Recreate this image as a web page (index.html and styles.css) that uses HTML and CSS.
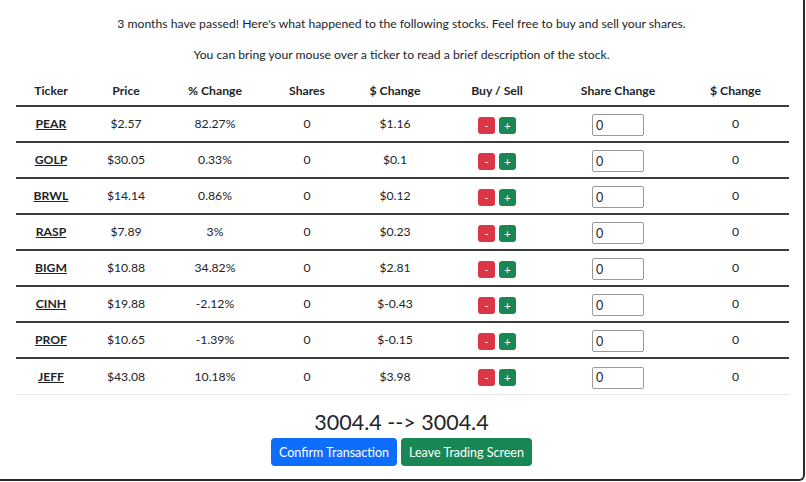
FILE: index.html
```html
<!DOCTYPE html>
<html lang="en">
<head>
  <meta charset="UTF-8" />
  <title>Trading Screen</title>
  <link rel="stylesheet" href="styles.css">
</head>
<body>
  <div class="window">
    <p class="intro">3 months have passed! Here's what happened to the following stocks. Feel free to buy and sell your shares.</p>
    <p class="intro">You can bring your mouse over a ticker to read a brief description of the stock.</p>

    <table class="stocks">
      <thead>
        <tr>
          <th class="c-ticker">Ticker</th>
          <th class="c-price">Price</th>
          <th class="c-pct">% Change</th>
          <th class="c-shares">Shares</th>
          <th class="c-dollar">$ Change</th>
          <th class="c-trade">Buy / Sell</th>
          <th class="c-share-chg">Share Change</th>
          <th class="c-total">$ Change</th>
        </tr>
      </thead>
      <tbody>
        <tr>
          <td><a class="ticker" href="#">PEAR</a></td><td>$2.57</td><td>82.27%</td><td>0</td><td>$1.16</td>
          <td><button class="mini sell">-</button><button class="mini buy">+</button></td>
          <td><input class="qty" type="text" value="0"></td><td>0</td>
        </tr>
        <tr>
          <td><a class="ticker" href="#">GOLP</a></td><td>$30.05</td><td>0.33%</td><td>0</td><td>$0.1</td>
          <td><button class="mini sell">-</button><button class="mini buy">+</button></td>
          <td><input class="qty" type="text" value="0"></td><td>0</td>
        </tr>
        <tr>
          <td><a class="ticker" href="#">BRWL</a></td><td>$14.14</td><td>0.86%</td><td>0</td><td>$0.12</td>
          <td><button class="mini sell">-</button><button class="mini buy">+</button></td>
          <td><input class="qty" type="text" value="0"></td><td>0</td>
        </tr>
        <tr>
          <td><a class="ticker" href="#">RASP</a></td><td>$7.89</td><td>3%</td><td>0</td><td>$0.23</td>
          <td><button class="mini sell">-</button><button class="mini buy">+</button></td>
          <td><input class="qty" type="text" value="0"></td><td>0</td>
        </tr>
        <tr>
          <td><a class="ticker" href="#">BIGM</a></td><td>$10.88</td><td>34.82%</td><td>0</td><td>$2.81</td>
          <td><button class="mini sell">-</button><button class="mini buy">+</button></td>
          <td><input class="qty" type="text" value="0"></td><td>0</td>
        </tr>
        <tr>
          <td><a class="ticker" href="#">CINH</a></td><td>$19.88</td><td>-2.12%</td><td>0</td><td>$-0.43</td>
          <td><button class="mini sell">-</button><button class="mini buy">+</button></td>
          <td><input class="qty" type="text" value="0"></td><td>0</td>
        </tr>
        <tr>
          <td><a class="ticker" href="#">PROF</a></td><td>$10.65</td><td>-1.39%</td><td>0</td><td>$-0.15</td>
          <td><button class="mini sell">-</button><button class="mini buy">+</button></td>
          <td><input class="qty" type="text" value="0"></td><td>0</td>
        </tr>
        <tr class="last">
          <td><a class="ticker" href="#">JEFF</a></td><td>$43.08</td><td>10.18%</td><td>0</td><td>$3.98</td>
          <td><button class="mini sell">-</button><button class="mini buy">+</button></td>
          <td><input class="qty" type="text" value="0"></td><td>0</td>
        </tr>
      </tbody>
    </table>

    <div class="balance">3004.4 --&gt; 3004.4</div>
    <div class="actions">
      <button class="btn primary">Confirm Transaction</button>
      <button class="btn success">Leave Trading Screen</button>
    </div>
  </div>
</body>
</html>
```

FILE: styles.css
```css
:root {
  --text: #212529;
  --line: #3c3c3c;
  --danger: #dc3545;
  --success: #198754;
  --primary: #0d6efd;
}

body {
  margin: 0;
  background: #fff;
  color: var(--text);
  font-family: Lato, "Open Sans", sans-serif;
  font-size: 12.2px;
  overflow: hidden;
}

.window {
  box-sizing: border-box;
  width: 805px;
  height: 481px;
  border-right: 2px solid #2a2a2a;
  border-bottom: 2px solid #2a2a2a;
  border-bottom-right-radius: 6px;
  padding: 14px 16px 0 16px;
  text-align: center;
}

.intro {
  margin: 0 0 11px;
  line-height: 20px;
}

.stocks {
  width: 773px;
  border-collapse: collapse;
  table-layout: fixed;
  margin-top: 8px;
  line-height: 18px;
}

.stocks th {
  font-weight: 700;
  height: 29px;
  padding: 0;
  border-bottom: 2px solid var(--line);
  vertical-align: middle;
}

.stocks td {
  height: 34px;
  padding: 0;
  border-bottom: 2px solid var(--line);
  vertical-align: middle;
}

.stocks tr.last td {
  border-bottom: 1px solid #e5e5e5;
  height: 35px;
}

.c-ticker { width: 70px; }
.c-price { width: 80px; }
.c-pct { width: 98px; }
.c-shares { width: 86px; }
.c-dollar { width: 90px; }
.c-trade { width: 114px; }
.c-share-chg { width: 128px; }

.ticker {
  color: var(--text);
  font-weight: 700;
  text-decoration: underline;
}

.mini {
  width: 17px;
  height: 17px;
  padding: 0;
  margin: 2px 2px 0;
  border: none;
  border-radius: 3px;
  color: #fff;
  font-family: inherit;
  font-size: 11px;
  line-height: 17px;
  vertical-align: middle;
}

.sell { background: var(--danger); }
.buy { background: var(--success); }

.qty {
  box-sizing: border-box;
  width: 52px;
  height: 22px;
  margin-top: 2px;
  padding: 0 3px;
  border: 1px solid #9a9a9a;
  border-radius: 2px;
  font-family: inherit;
  font-size: 12.5px;
  color: var(--text);
  vertical-align: middle;
}

.balance {
  margin-top: 14px;
  font-size: 21.5px;
  line-height: 26px;
}

.actions {
  display: flex;
  justify-content: center;
  gap: 4px;
  margin-top: 3px;
}

.btn {
  height: 28px;
  padding: 0 8px;
  border: none;
  border-radius: 4px;
  color: #fff;
  font-family: inherit;
  font-size: 12.5px;
}

.primary { background: var(--primary); }
.success { background: var(--success); }
```
